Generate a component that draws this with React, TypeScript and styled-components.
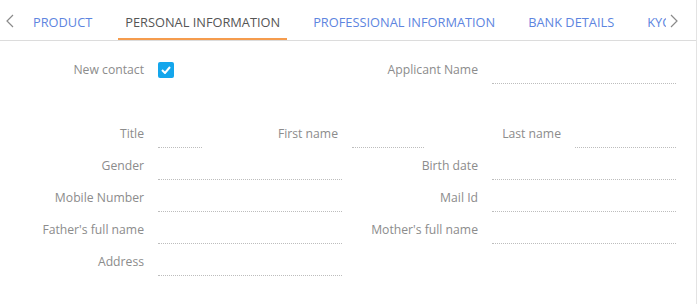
import React from "react";
import styled, { createGlobalStyle } from "styled-components";

const GlobalStyle = createGlobalStyle`
  html, body {
    margin: 0;
    padding: 0;
    background: #fff;
  }
  body {
    font-family: "Open Sans", "Liberation Sans", sans-serif;
  }
`;

const Page = styled.div`
  width: 696px;
  height: 304px;
  border-right: 1px solid #e3e3e3;
  background: #fff;
`;

const TabBar = styled.div`
  display: flex;
  align-items: stretch;
  height: 40px;
  border-bottom: 1px solid #dcdcdc;
`;

const Arrow = styled.button<{ $w: number; $pad: number }>`
  display: flex;
  align-items: center;
  justify-content: flex-start;
  width: ${(p) => p.$w}px;
  flex: none;
  padding: 2px 0 0 ${(p) => p.$pad}px;
  border: none;
  background: none;
  color: #8a8a8a;
  svg {
    width: 8px;
    height: 14px;
  }
`;

const Strip = styled.div`
  flex: 1;
  display: flex;
  gap: 19px;
  overflow: hidden;
  white-space: nowrap;
`;

const Tab = styled.div<{ $active?: boolean }>`
  flex: none;
  display: flex;
  align-items: center;
  padding: 5px 7px 0;
  font-size: 12.8px;
  text-transform: uppercase;
  color: ${(p) => (p.$active ? "#555555" : "#5d85e0")};
  border-bottom: 3px solid ${(p) => (p.$active ? "#f59c4d" : "transparent")};
  margin-bottom: -1px;
`;

const Form = styled.div`
  padding-top: 13px;
`;

const Row = styled.div<{ $cols: string; $gapAfter?: number }>`
  display: grid;
  grid-template-columns: ${(p) => p.$cols};
  height: 32px;
  margin-bottom: ${(p) => p.$gapAfter ?? 0}px;
`;

const Label = styled.div`
  text-align: right;
  font-size: 12.2px;
  line-height: 18px;
  margin-top: 7px;
  padding-right: 14px;
  color: #8c8c8c;
  white-space: nowrap;
`;

const Field = styled.div`
  height: 29px;
  border-bottom: 1px dotted #bdbdbd;
`;

const Check = styled.div`
  width: 16px;
  height: 16px;
  margin-top: 8px;
  border-radius: 2px;
  background: #14a6ec;
  display: flex;
  align-items: center;
  justify-content: center;
  svg {
    width: 10px;
    height: 8px;
  }
`;

const two = "158px 184px 150px 184px";
const three = "158px 44px 150px 72px 151px 101px";

const tabs = [
  "Product",
  "Personal information",
  "Professional information",
  "Bank details",
  "KYC",
];

export default function App() {
  return (
    <Page>
      <GlobalStyle />
      <TabBar>
        <Arrow $w={26} $pad={6}>
          <svg viewBox="0 0 8 14" fill="none" stroke="currentColor" strokeWidth="1.2">
            <polyline points="7,1 1,7 7,13" />
          </svg>
        </Arrow>
        <Strip>
          {tabs.map((t, i) => (
            <Tab key={t} $active={i === 1}>
              {t}
            </Tab>
          ))}
        </Strip>
        <Arrow $w={30} $pad={4}>
          <svg viewBox="0 0 8 14" fill="none" stroke="currentColor" strokeWidth="1.2">
            <polyline points="1,1 7,7 1,13" />
          </svg>
        </Arrow>
      </TabBar>
      <Form>
        <Row $cols={two} $gapAfter={32}>
          <Label>New contact</Label>
          <div>
            <Check>
              <svg viewBox="0 0 10 8" fill="none" stroke="#fff" strokeWidth="2">
                <polyline points="1,4 4,7 9,1" />
              </svg>
            </Check>
          </div>
          <Label>Applicant Name</Label>
          <Field />
        </Row>
        <Row $cols={three}>
          <Label>Title</Label>
          <Field />
          <Label>First name</Label>
          <Field />
          <Label>Last name</Label>
          <Field />
        </Row>
        <Row $cols={two}>
          <Label>Gender</Label>
          <Field />
          <Label>Birth date</Label>
          <Field />
        </Row>
        <Row $cols={two}>
          <Label>Mobile Number</Label>
          <Field />
          <Label>Mail Id</Label>
          <Field />
        </Row>
        <Row $cols={two}>
          <Label>Father's full name</Label>
          <Field />
          <Label>Mother's full name</Label>
          <Field />
        </Row>
        <Row $cols={two}>
          <Label>Address</Label>
          <Field />
        </Row>
      </Form>
    </Page>
  );
}
